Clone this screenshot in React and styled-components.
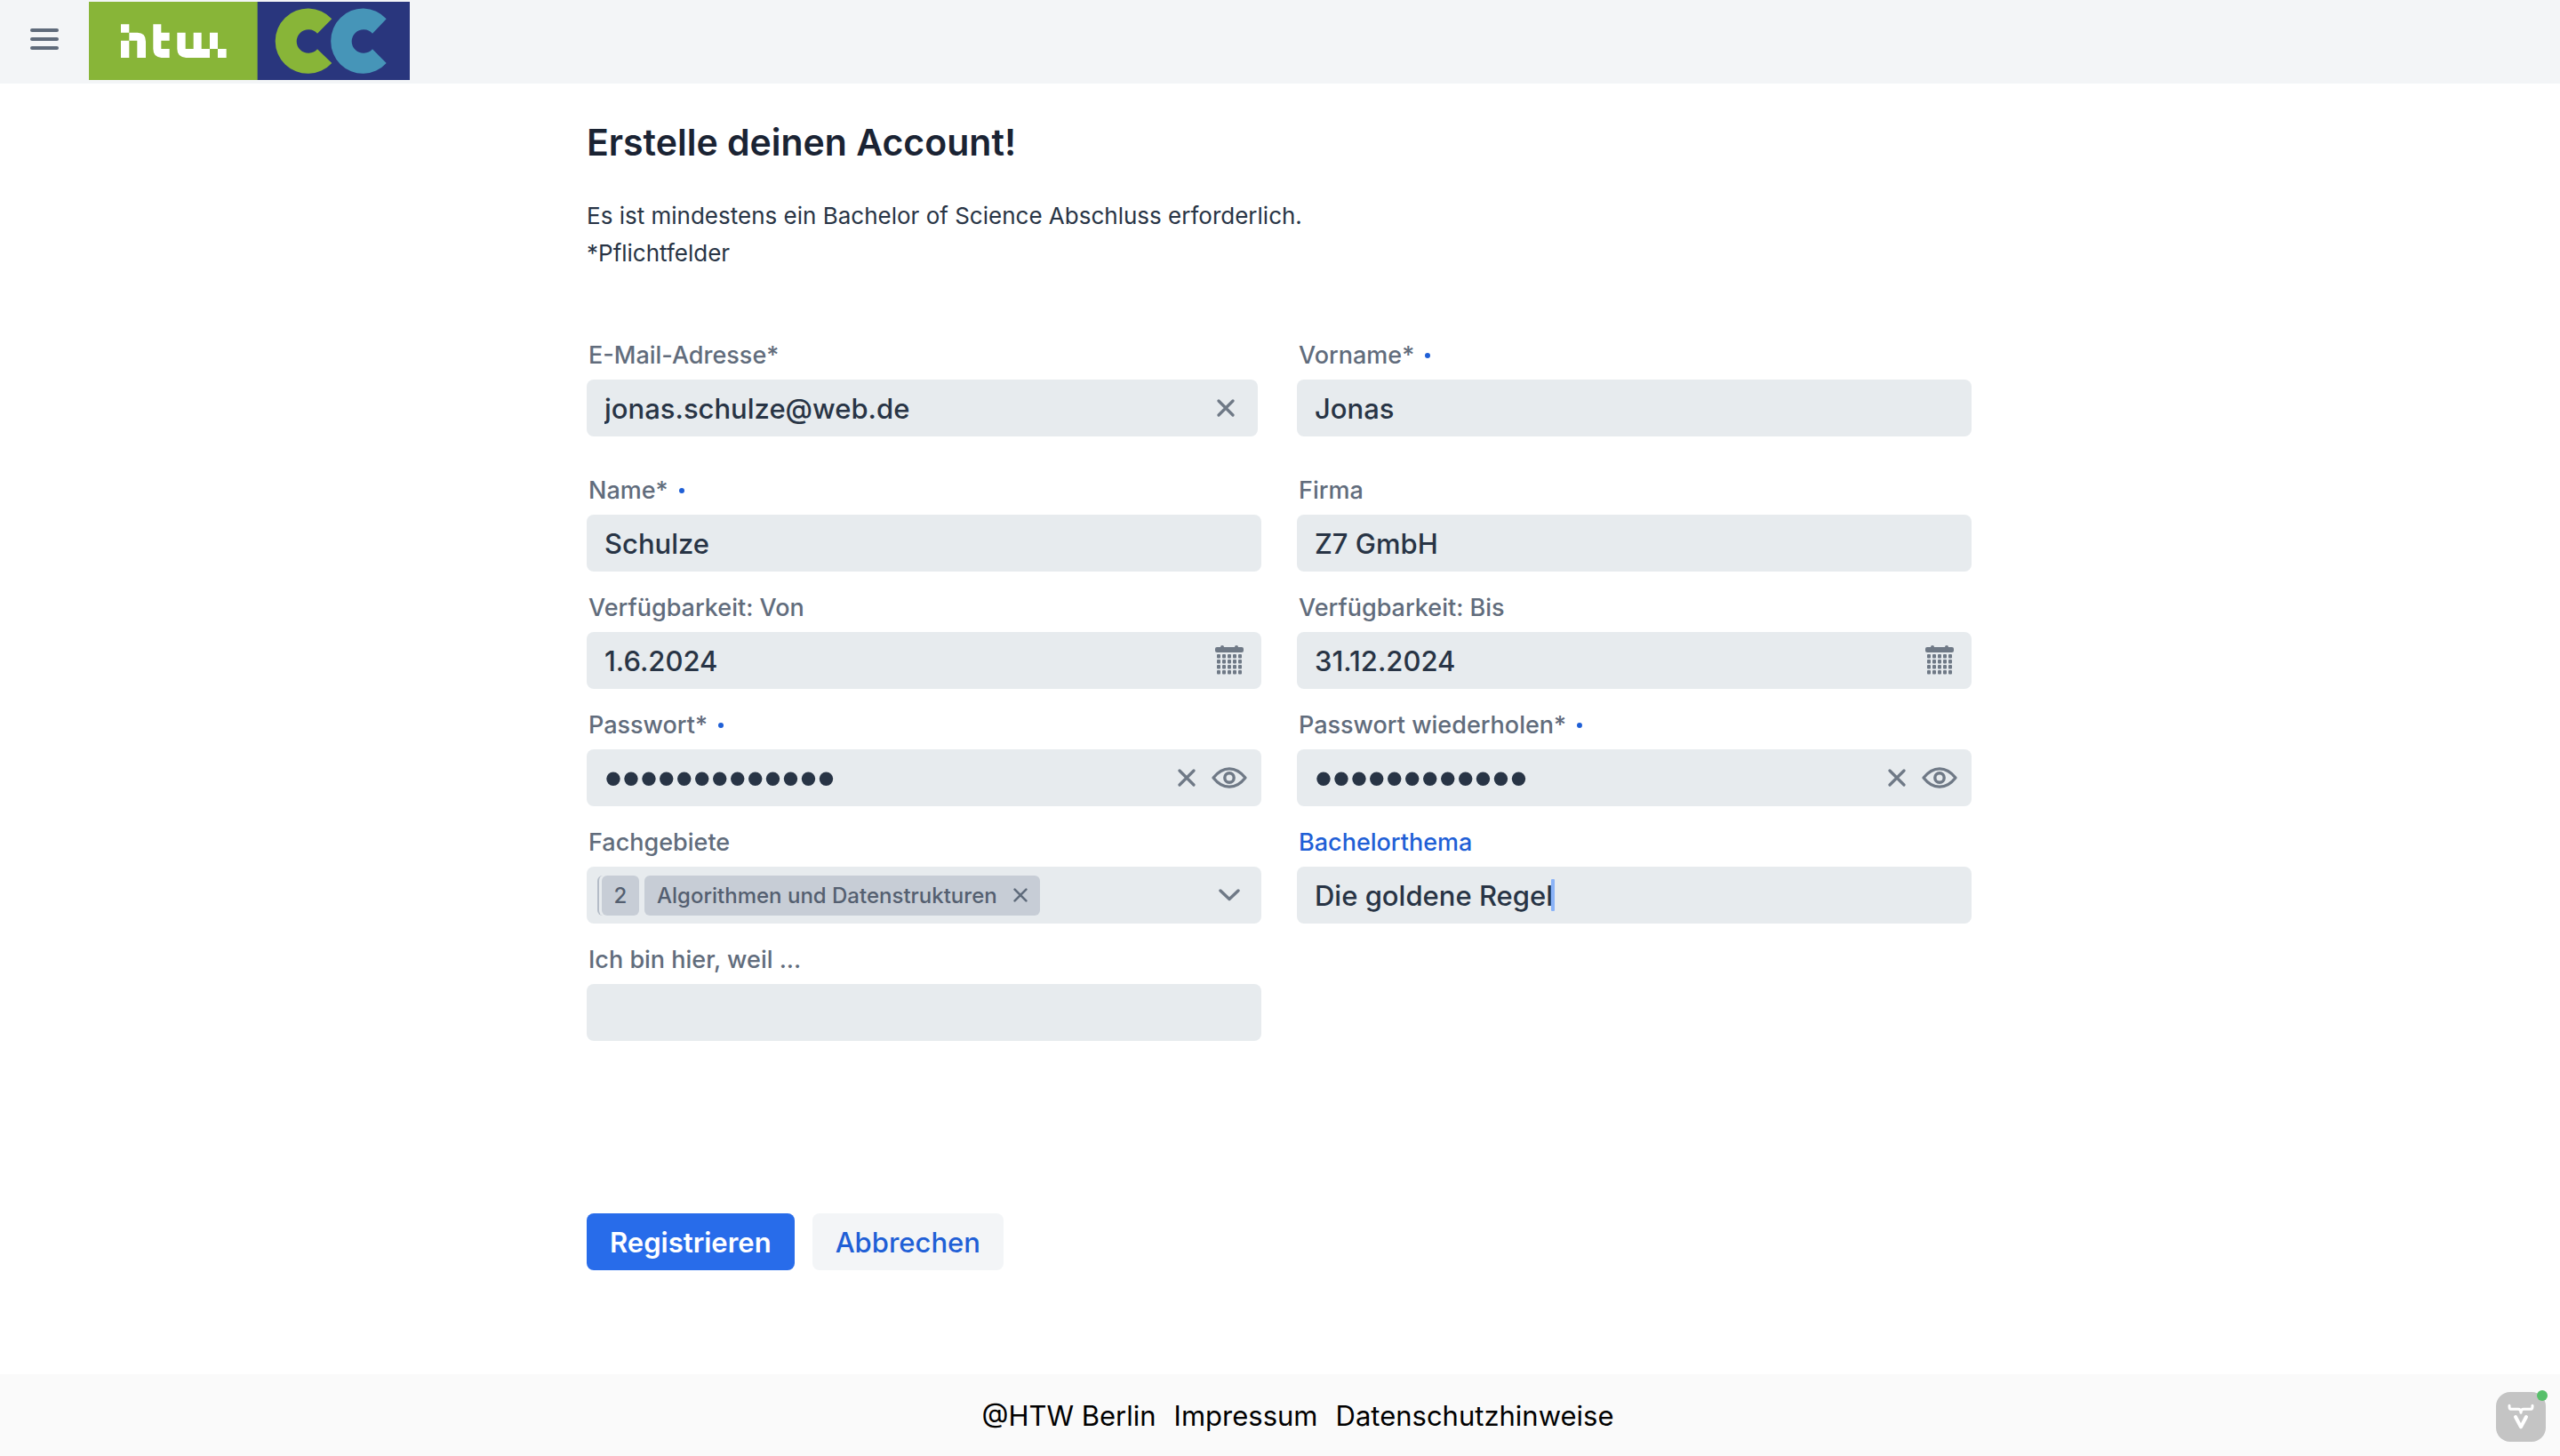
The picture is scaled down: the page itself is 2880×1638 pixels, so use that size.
import React, { useState } from "react";
import styled, { createGlobalStyle } from "styled-components";

const GlobalStyle = createGlobalStyle`
  *, *::before, *::after { box-sizing: border-box; }
  body {
    margin: 0;
    background: #fff;
    color: #283445;
    font-family: Inter, "Liberation Sans", sans-serif;
  }
  input, button { font-family: inherit; }
`;

const Page = styled.div`
  min-height: 100vh;
  display: flex;
  flex-direction: column;
`;

const Header = styled.header`
  height: 94px;
  padding: 0 24px;
  display: flex;
  align-items: flex-start;
  gap: 24px;
  background: #f3f5f7;
`;

const IconButton = styled.button`
  display: flex;
  align-items: center;
  justify-content: center;
  flex: none;
  padding: 0;
  border: 0;
  background: none;
  color: ${(p) => p.$color || "#6f7986"};
  width: ${(p) => p.$width || 48}px;
  height: ${(p) => p.$height || 48}px;
  cursor: pointer;
`;

const MenuButton = styled(IconButton)`
  width: 52px;
  height: 88px;
  color: #5f6b7b;
`;

const HomeLink = styled.a`
  display: block;
  padding-top: 2px;
`;

const Main = styled.main`
  flex: 1;
  width: 100%;
  max-width: 1560px;
  margin: 0 auto;
  padding: 38px 2px 114px 0;
`;

const Title = styled.h1`
  margin: 0;
  font-size: 41px;
  line-height: 56px;
  font-weight: 600;
  color: #1a2333;
`;

const Intro = styled.p`
  margin: 34px 0 77px;
  font-size: 26px;
  line-height: 42px;
`;

const FormGrid = styled.div`
  display: grid;
  grid-template-columns: repeat(2, minmax(0, 1fr));
  gap: 24px 40px;
`;

const FieldBox = styled.div`
  display: flex;
  flex-direction: column;
  gap: 10px;
  padding: ${(p) => (p.$helper ? "0 4px 20px 0" : "0")};
`;

const Label = styled.label`
  display: flex;
  align-items: center;
  gap: 12px;
  padding-left: 2px;
  font-size: 27px;
  line-height: 34px;
  font-weight: 500;
  color: ${(p) => (p.$active ? "#1f5fd6" : "#616c7c")};
`;

const RequiredDot = styled.span`
  width: 6px;
  height: 6px;
  border-radius: 50%;
  background: #1f5fd6;
`;

const Control = styled.div`
  display: flex;
  align-items: center;
  height: 64px;
  padding: 0 12px 0 ${(p) => (p.$chips ? 12 : 20)}px;
  border-radius: 8px;
  background: #e7ebee;
`;

const TextInput = styled.input`
  flex: ${(p) => (p.$fit ? "0 1 auto" : "1 1 0")};
  field-sizing: ${(p) => (p.$fit ? "content" : "fixed")};
  min-width: 0;
  height: 64px;
  padding: 0;
  border: 0;
  outline: 0;
  background: transparent;
  color: #283445;
  font-size: 31px;
  font-weight: 500;

  &[type="password"] {
    font-family: "Liberation Sans", sans-serif;
    font-size: 57px;
    font-weight: 400;
  }
`;

const Caret = styled.span`
  flex: none;
  width: 4px;
  height: 36px;
  margin-left: -2px;
  border-radius: 1px;
  background: #8bb3f7;
`;

const Chip = styled.span`
  display: flex;
  align-items: center;
  height: 45px;
  border-radius: 6px;
  background: #c7cdd6;
  color: #545f70;
  font-size: 24px;
  font-weight: 500;
  white-space: nowrap;
`;

const CountChip = styled(Chip)`
  justify-content: center;
  width: 42px;
  margin: 0 6px 0 5px;
  position: relative;

  &::before {
    content: "";
    position: absolute;
    inset: 0 auto 0 -5px;
    width: 8px;
    border-left: 2px solid #b4bcc7;
    border-radius: 6px 0 0 6px;
  }
`;

const ValueChip = styled(Chip)`
  padding: 0 12px 0 14px;
  gap: 16px;
`;

const Actions = styled.div`
  display: flex;
  gap: 20px;
  margin-top: 194px;
`;

const Button = styled.button`
  height: 64px;
  padding: 0 26px;
  border: 0;
  border-radius: 8px;
  font-size: 31px;
  font-weight: ${(p) => (p.$primary ? 600 : 500)};
  background: ${(p) => (p.$primary ? "#286cea" : "#f3f5f7")};
  color: ${(p) => (p.$primary ? "#fff" : "#1f5fd6")};
  cursor: pointer;
`;

const Footer = styled.footer`
  height: 92px;
  padding-left: 40px;
  display: flex;
  align-items: center;
  justify-content: center;
  gap: 20px;
  background: #fafafa;
  color: #000;
  font-size: 31px;
`;

const FooterLink = styled.a`
  color: inherit;
  text-decoration: none;
`;

const DevTools = styled.button`
  position: fixed;
  right: 16px;
  bottom: 16px;
  width: 56px;
  height: 56px;
  padding: 0;
  border: 0;
  border-radius: 16px;
  background: #c4c4c4;

  &::after {
    content: "";
    position: absolute;
    top: -2px;
    right: -2px;
    width: 12px;
    height: 12px;
    border-radius: 50%;
    background: #57bf6a;
  }
`;

const MenuIcon = () => (
  <svg width="32" height="24" viewBox="0 0 96 72" fill="currentColor">
    <rect width="96" height="12" y="0" rx="6" />
    <rect width="96" height="12" y="30" rx="6" />
    <rect width="96" height="12" y="60" rx="6" />
  </svg>
);

const Logo = () => (
  <svg width="361" height="88" viewBox="300 6 1083 264" role="img" aria-label="HTW CC">
    <rect x="300" y="6" width="570" height="264" fill="#88b538" />
    <rect x="869" y="6" width="514" height="264" fill="#29367d" />
    <g fill="#fff">
      <path d="M408 82h28v28h-28zM408 137h28v58h-28z" />
      <path d="M436 110h28q28 0 28 30v55h-29v-58h-27z" />
      <path d="M517 82h27v28h28v27h-28v28h28v30h-27q-28-2-28-30z" />
      <path d="M598 110h28v55h27v-55h27v55h28v30h-80q-30-2-30-30zM708 110h27v55h-27zM735 165h29v30h-29z" />
    </g>
    <path
      d="M1120 64A110 110 0 1 0 1120 213L1071 166A40 40 0 1 1 1071 113Z"
      fill="#88b538"
    />
    <path
      d="M1304 64A108 110 0 1 0 1304 213L1257 166A40 40 0 1 1 1257 113Z"
      fill="#4695b8"
    />
  </svg>
);

const CrossIcon = ({ size = 20 }) => (
  <svg
    width={size}
    height={size}
    viewBox="0 0 20 20"
    fill="none"
    stroke="currentColor"
    strokeWidth="3.2"
    strokeLinecap="round"
  >
    <path d="M2 2l16 16M18 2L2 18" />
  </svg>
);

const EyeIcon = () => (
  <svg width="40" height="24" viewBox="0 0 40 24" fill="none" stroke="currentColor">
    <path
      d="M2 12Q10 1.8 20 1.8T38 12Q30 22.2 20 22.2T2 12Z"
      strokeWidth="3.2"
      strokeLinejoin="round"
    />
    <circle cx="20" cy="12" r="5.2" strokeWidth="3.4" />
  </svg>
);

const CalendarIcon = () => (
  <svg width="32" height="34" viewBox="0 0 32 34" fill="currentColor">
    <rect x="0" y="2" width="32" height="6" rx="2" />
    <rect x="6" y="0" width="4" height="6" rx="2" />
    <rect x="22" y="0" width="4" height="6" rx="2" />
    {[10, 16, 22, 28].map((y) =>
      [2, 8, 14, 20, 26].map((x) => (
        <rect key={`${x}-${y}`} x={x} y={y} width="4" height="4.4" rx="1" />
      ))
    )}
  </svg>
);

const ChevronIcon = () => (
  <svg
    width="24"
    height="14"
    viewBox="0 0 24 14"
    fill="none"
    stroke="currentColor"
    strokeWidth="3.4"
    strokeLinecap="round"
    strokeLinejoin="round"
  >
    <path d="M2 2l10 9.5L22 2" />
  </svg>
);

const VaadinIcon = () => (
  <svg
    width="56"
    height="56"
    viewBox="0 0 168 168"
    fill="none"
    stroke="#fff"
    strokeLinecap="round"
    strokeLinejoin="round"
  >
    <path
      d="M45 46v4q0 8 8 8h22q9 0 9 12q0-12 9-12h22q8 0 8-8v-4"
      strokeWidth="9"
    />
    <path d="M66 84l18 34l18-34" strokeWidth="12" />
  </svg>
);

function Field({ id, label, required, active, helper, type = "text", value, children }) {
  const [text, setText] = useState(value);
  return (
    <FieldBox $helper={helper}>
      <Label htmlFor={id} $active={active}>
        {label}
        {required && <RequiredDot />}
      </Label>
      <Control>
        <TextInput
          id={id}
          type={type}
          $fit={active}
          value={text}
          onChange={(e) => setText(e.target.value)}
        />
        {active && <Caret />}
        {children}
      </Control>
    </FieldBox>
  );
}

const ClearButton = () => (
  <IconButton type="button" aria-label="Leeren">
    <CrossIcon />
  </IconButton>
);

const RevealButton = () => (
  <IconButton type="button" aria-label="Passwort anzeigen">
    <EyeIcon />
  </IconButton>
);

const CalendarButton = () => (
  <IconButton type="button" aria-label="Kalender öffnen">
    <CalendarIcon />
  </IconButton>
);

function SubjectField() {
  const [text, setText] = useState("");
  return (
    <FieldBox>
      <Label htmlFor="fachgebiete">Fachgebiete</Label>
      <Control $chips>
        <CountChip>2</CountChip>
        <ValueChip>
          Algorithmen und Datenstrukturen
          <IconButton type="button" aria-label="Entfernen" $width={20} $height={44} $color="#5f6b7b">
            <CrossIcon size={16} />
          </IconButton>
        </ValueChip>
        <TextInput
          id="fachgebiete"
          role="combobox"
          aria-expanded="false"
          value={text}
          onChange={(e) => setText(e.target.value)}
        />
        <IconButton type="button" aria-label="Auswahl öffnen">
          <ChevronIcon />
        </IconButton>
      </Control>
    </FieldBox>
  );
}

export default function App() {
  return (
    <Page>
      <GlobalStyle />
      <Header>
        <MenuButton type="button" aria-label="Menü">
          <MenuIcon />
        </MenuButton>
        <HomeLink href="#" aria-label="Startseite">
          <Logo />
        </HomeLink>
      </Header>
      <Main>
        <Title>Erstelle deinen Account!</Title>
        <Intro>
          Es ist mindestens ein Bachelor of Science Abschluss erforderlich.
          <br />
          *Pflichtfelder
        </Intro>
        <form onSubmit={(e) => e.preventDefault()}>
          <FormGrid>
            <Field id="email" label="E-Mail-Adresse*" value="jonas.schulze@web.de" helper>
              <ClearButton />
            </Field>
            <Field id="vorname" label="Vorname*" value="Jonas" required />
            <Field id="name" label="Name*" value="Schulze" required />
            <Field id="firma" label="Firma" value="Z7 GmbH" />
            <Field id="von" label="Verfügbarkeit: Von" value="1.6.2024">
              <CalendarButton />
            </Field>
            <Field id="bis" label="Verfügbarkeit: Bis" value="31.12.2024">
              <CalendarButton />
            </Field>
            <Field id="passwort" label="Passwort*" type="password" value="passwort12345" required>
              <ClearButton />
              <RevealButton />
            </Field>
            <Field
              id="passwort2"
              label="Passwort wiederholen*"
              type="password"
              value="passwort1234"
              required
            >
              <ClearButton />
              <RevealButton />
            </Field>
            <SubjectField />
            <Field id="thema" label="Bachelorthema" value="Die goldene Regel" active />
            <Field id="grund" label="Ich bin hier, weil ..." value="" />
          </FormGrid>
          <Actions>
            <Button type="submit" $primary>
              Registrieren
            </Button>
            <Button type="button">Abbrechen</Button>
          </Actions>
        </form>
      </Main>
      <Footer>
        <span>@HTW Berlin</span>
        <FooterLink href="#impressum">Impressum</FooterLink>
        <FooterLink href="#datenschutz">Datenschutzhinweise</FooterLink>
      </Footer>
      <DevTools type="button" aria-label="Vaadin Development Mode">
        <VaadinIcon />
      </DevTools>
    </Page>
  );
}
